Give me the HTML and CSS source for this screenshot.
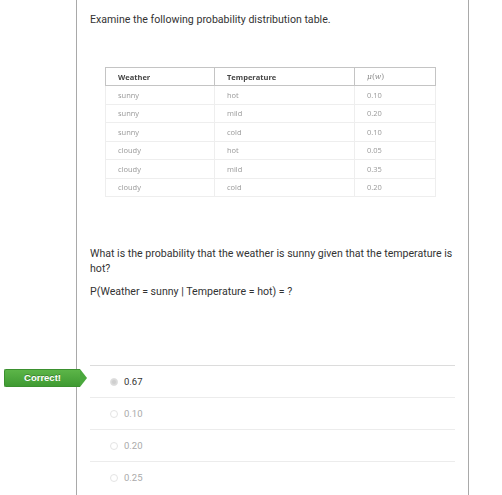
FILE: index.html
```html
<!DOCTYPE html>
<html>
<head>
<meta charset="utf-8">
<link rel="stylesheet" href="styles.css">
</head>
<body>
<div class="panel">
  <p class="intro">Examine the following probability distribution table.</p>
  <table class="dist">
    <thead>
      <tr><th class="c1">Weather</th><th class="c2">Temperature</th><th class="c3 math"><i>μ</i>(<i>w</i>)</th></tr>
    </thead>
    <tbody>
      <tr><td>sunny</td><td>hot</td><td>0.10</td></tr>
      <tr><td>sunny</td><td>mild</td><td>0.20</td></tr>
      <tr><td>sunny</td><td>cold</td><td>0.10</td></tr>
      <tr><td>cloudy</td><td>hot</td><td>0.05</td></tr>
      <tr><td>cloudy</td><td>mild</td><td>0.35</td></tr>
      <tr><td>cloudy</td><td>cold</td><td>0.20</td></tr>
    </tbody>
  </table>
  <p class="question">What is the probability that the weather is sunny given that the temperature is hot?</p>
  <p class="formula">P(Weather = sunny | Temperature = hot) = ?</p>
  <ul class="answers">
    <li class="answer selected">
      <span class="badge">Correct!</span>
      <span class="radio"></span><span class="label">0.67</span>
    </li>
    <li class="answer"><span class="radio"></span><span class="label">0.10</span></li>
    <li class="answer"><span class="radio"></span><span class="label">0.20</span></li>
    <li class="answer"><span class="radio"></span><span class="label">0.25</span></li>
  </ul>
</div>
</body>
</html>
```

FILE: styles.css
```css
html, body {
  margin: 0;
  padding: 0;
  background: #fff;
}
body {
  font-family: Roboto, "Liberation Sans", sans-serif;
  color: #333;
  overflow: hidden;
}
.panel {
  margin-left: 76px;
  width: 365px;
  min-height: 495px;
  padding: 12px 13px 0;
  border-left: 1px solid #a9a9a9;
  border-right: 1px solid #a9a9a9;
}
.intro {
  margin: 0;
  font-size: 10.6px;
  line-height: 15px;
}
.dist {
  margin: 40px 0 0 15px;
  border-collapse: collapse;
  width: 331px;
  font-family: "Open Sans", sans-serif;
  font-size: 7.5px;
  filter: blur(0.3px);
}
.dist th, .dist td {
  text-align: left;
  padding: 0 0 0 12px;
  height: 17.5px;
  border: 1px solid #eeeeee;
  color: #999;
  font-weight: 400;
}
.dist th {
  height: 17px;
  border: 1px solid #c4c4c4;
  color: #444;
  font-weight: 700;
}
.dist th.math {
  font-family: "DejaVu Serif", serif;
  font-weight: 400;
  color: #888;
  font-size: 7.5px;
}
.c1 { width: 96px; }
.c2 { width: 127px; }
.question {
  margin: 49px 0 0;
  font-size: 10.6px;
  line-height: 15px;
}
.formula {
  margin: 8px 0 0;
  font-size: 10.6px;
  line-height: 15px;
}
.answers {
  list-style: none;
  margin: 66px 0 0;
  padding: 0;
}
.answer {
  position: relative;
  display: flex;
  align-items: center;
  height: 31px;
  padding-left: 20px;
  border-top: 1px solid #ececec;
}
.answer.selected {
  border-top: 1px solid #dcdcdc;
}
.radio {
  width: 6px;
  height: 6px;
  border-radius: 50%;
  border: 1px solid #e4e4e4;
  background: #fff;
  margin-right: 6px;
}
.selected .radio {
  background: #cfcfcf;
  border-color: #e2e2e2;
  box-shadow: inset 0 0 0 1px #dadada;
}
.label {
  font-size: 9.5px;
  color: #aaa;
}
.selected .label {
  color: #333;
}
.badge {
  position: absolute;
  left: -86px;
  top: 3px;
  width: 76px;
  height: 18px;
  box-sizing: border-box;
  border-radius: 2px 0 0 2px;
  background: linear-gradient(#5cb548, #3f9a32);
  border: 1px solid #3b902f;
  border-right: 0;
  color: #fff;
  font-family: "Liberation Sans", Arial, sans-serif;
  font-weight: 700;
  font-size: 9.5px;
  line-height: 16px;
  text-align: center;
  text-shadow: 0 -1px 0 rgba(0,0,0,0.25);
}
.badge::after {
  content: "";
  position: absolute;
  right: -7px;
  top: -1px;
  border-style: solid;
  border-width: 9px 0 9px 7px;
  border-color: transparent transparent transparent #4aa83d;
}
```
